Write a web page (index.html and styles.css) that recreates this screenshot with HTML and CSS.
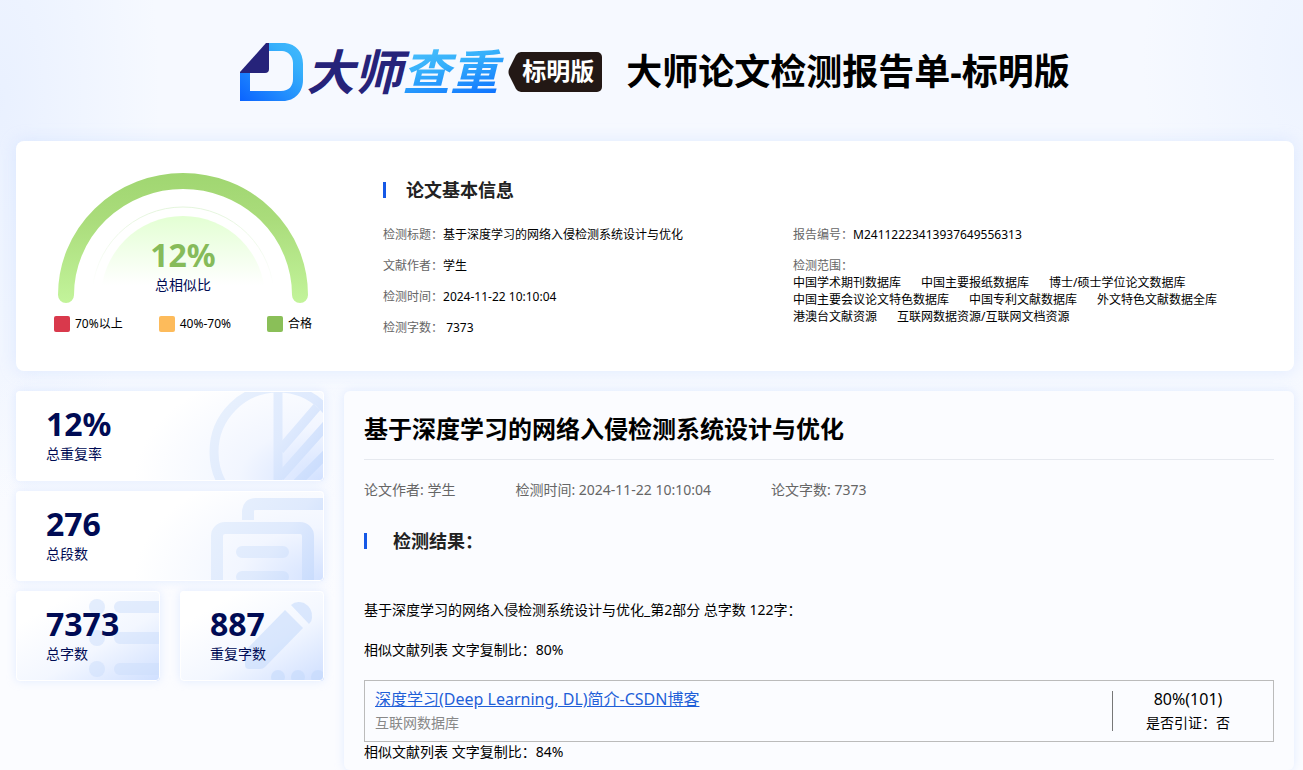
FILE: index.html
```html
<!DOCTYPE html>
<html lang="zh-CN">
<head>
<meta charset="utf-8">
<meta name="viewport" content="width=device-width, initial-scale=1">
<title>大师论文检测报告单-标明版</title>
<link rel="stylesheet" href="styles.css">
</head>
<body>
<div class="page">
  <header class="header">
    <div class="logo">
      <svg class="logo-mark" width="63" height="58" viewBox="0 0 63 58" aria-hidden="true">
        <defs>
          <linearGradient id="markBlue" x1="0" y1="1" x2="1" y2="0">
            <stop offset="0" stop-color="#0a63ff"/>
            <stop offset=".75" stop-color="#36b0fb"/>
            <stop offset="1" stop-color="#43bbfc"/>
          </linearGradient>
        </defs>
        <path fill="url(#markBlue)" d="M27 0H45C56 1 63 9 63 21V37C63 49 55 58 43 58H0V30H10V48H41C49 48 53 43 53 36V20C53 13 48 8 42 8H27Z"/>
        <path fill="#26237a" d="M26 0H29V26Q29 30 25 30H0V29Z"/>
      </svg>
      <span class="logo-name">大师<span class="logo-accent">查重</span></span>
      <span class="edition"><svg class="edition-tip" width="13" height="40" viewBox="0 0 13 40" aria-hidden="true"><path fill="#231815" d="M13 0Q10 0 8 3L1 17Q0 20 1 23L8 37Q10 40 13 40Z"/></svg><span class="edition-label">标明版</span></span>
    </div>
    <h1 class="report-title">大师论文检测报告单-标明版</h1>
  </header>

  <main>
    <section class="summary">
      <div class="overview">
        <div class="gauge">
          <svg class="gauge-art" width="250" height="131" viewBox="0 0 250 131" aria-hidden="true">
            <defs>
              <linearGradient id="arcGreen" gradientUnits="userSpaceOnUse" x1="0" y1="0" x2="0" y2="131">
                <stop offset="0" stop-color="#a0d671"/>
                <stop offset=".35" stop-color="#aadc7b"/>
                <stop offset="1" stop-color="#c3f49b"/>
              </linearGradient>
              <linearGradient id="discGreen" gradientUnits="userSpaceOnUse" x1="0" y1="43" x2="0" y2="112">
                <stop offset="0" stop-color="#e3ffd3"/>
                <stop offset="1" stop-color="#ffffff"/>
              </linearGradient>
              <linearGradient id="hairGreen" gradientUnits="userSpaceOnUse" x1="0" y1="34" x2="0" y2="112">
                <stop offset="0" stop-color="#e4f5dc"/>
                <stop offset="1" stop-color="#ffffff"/>
              </linearGradient>
            </defs>
            <path d="M8 122A117 114 0 0 1 242 122" fill="none" stroke="url(#arcGreen)" stroke-width="16" stroke-linecap="round"/>
            <path d="M34 125A91 91 0 0 1 216 125" fill="none" stroke="url(#hairGreen)"/>
            <path d="M43 125A82 82 0 0 1 207 125Z" fill="url(#discGreen)"/>
          </svg>
          <div class="gauge-text">
            <strong class="gauge-value">12%</strong>
            <span class="gauge-label">总相似比</span>
          </div>
        </div>
        <ul class="legend">
          <li class="legend-item"><span class="swatch swatch-high"></span>70%以上</li>
          <li class="legend-item"><span class="swatch swatch-mid"></span>40%-70%</li>
          <li class="legend-item"><span class="swatch swatch-ok"></span>合格</li>
        </ul>
      </div>
      <div class="basics">
        <h2 class="section-title">论文基本信息</h2>
        <div class="facts">
          <dl class="fact-list">
            <div class="fact"><dt>检测标题：</dt><dd>基于深度学习的网络入侵检测系统设计与优化</dd></div>
            <div class="fact"><dt>文献作者：</dt><dd>学生</dd></div>
            <div class="fact"><dt>检测时间：</dt><dd>2024-11-22 10:10:04</dd></div>
            <div class="fact"><dt>检测字数：</dt><dd>&nbsp;7373</dd></div>
          </dl>
          <dl class="fact-list">
            <div class="fact"><dt>报告编号：</dt><dd>M24112223413937649556313</dd></div>
            <div class="fact fact-block">
              <dt>检测范围：</dt>
              <dd class="scope">
                <span>中国学术期刊数据库</span><span>中国主要报纸数据库</span><span>博士/硕士学位论文数据库</span>
                <span>中国主要会议论文特色数据库</span><span>中国专利文献数据库</span><span>外文特色文献数据全库</span>
                <span>港澳台文献资源</span><span>互联网数据资源/互联网文档资源</span>
              </dd>
            </div>
          </dl>
        </div>
      </div>
    </section>

    <div class="columns">
      <aside class="stats">
        <div class="stat stat-wide">
          <svg class="stat-art" width="120" height="90" viewBox="0 0 120 90" aria-hidden="true">
            <defs>
              <linearGradient id="artBlue" gradientUnits="userSpaceOnUse" x1="0" y1="0" x2="120" y2="90">
                <stop offset="0" stop-color="#eaf2fd"/>
                <stop offset=".6" stop-color="#dfeafd"/>
                <stop offset="1" stop-color="#c6dafd"/>
              </linearGradient>
            </defs>
            <g fill="none" stroke="url(#artBlue)" stroke-width="9">
              <circle cx="74" cy="61" r="64"/>
              <path d="M74 0V90"/>
              <path d="M76 59L113 16M76 86L125 31M93 92L125 60"/>
            </g>
          </svg>
          <strong class="stat-value">12%</strong>
          <span class="stat-label">总重复率</span>
        </div>
        <div class="stat stat-wide">
          <svg class="stat-art" width="120" height="90" viewBox="0 0 120 90" aria-hidden="true">
            <g fill="none" stroke="url(#artBlue)" stroke-width="12">
              <path d="M44 29V21Q44 13 52 13H121"/>
              <rect x="13" y="37" width="91" height="80" rx="8"/>
              <path stroke-linecap="round" d="M38 61H79M38 86H79"/>
            </g>
          </svg>
          <strong class="stat-value">276</strong>
          <span class="stat-label">总段数</span>
        </div>
        <div class="stat stat-deep">
          <svg class="stat-art" width="144" height="90" viewBox="0 0 144 90" aria-hidden="true">
            <g fill="#ccdefc" fill-opacity=".5">
              <circle cx="81" cy="16" r="8"/><circle cx="81" cy="47" r="8"/><circle cx="81" cy="78" r="8"/>
              <path d="M104 10H144V22H104A6 6 0 0 1 104 10ZM104 41H144V53H104A6 6 0 0 1 104 41ZM104 72H144V84H104A6 6 0 0 1 104 72Z"/>
            </g>
          </svg>
          <strong class="stat-value">7373</strong>
          <span class="stat-label">总字数</span>
        </div>
        <div class="stat stat-deep">
          <svg class="stat-art" width="144" height="90" viewBox="0 0 144 90" aria-hidden="true">
            <g fill="#c3d8fb" fill-opacity=".55">
              <path d="M105 19L123 37L85 76Q83 78 80 78H69Q65 78 65 74V62Q65 60 67 58Z"/>
              <path d="M111 14Q116 9 124 12Q133 17 132 27Q132 30 129 33Z"/>
              <circle cx="98" cy="86" r="7"/><circle cx="118" cy="86" r="7"/><circle cx="138" cy="86" r="7"/>
            </g>
          </svg>
          <strong class="stat-value">887</strong>
          <span class="stat-label">重复字数</span>
        </div>
      </aside>

      <article class="report">
        <h2 class="paper-title">基于深度学习的网络入侵检测系统设计与优化</h2>
        <div class="paper-meta">
          <span>论文作者: 学生</span>
          <span>检测时间: 2024-11-22 10:10:04</span>
          <span>论文字数: 7373</span>
        </div>
        <h3 class="section-title result-title">检测结果：</h3>
        <p class="line">基于深度学习的网络入侵检测系统设计与优化_第2部分 总字数 122字：</p>
        <p class="line">相似文献列表 文字复制比：80%</p>
        <div class="source">
          <div class="source-main">
            <a class="source-link" href="#">深度学习(Deep Learning, DL)简介-CSDN博客</a>
            <span class="source-origin">互联网数据库</span>
          </div>
          <div class="source-score">
            <span class="score-rate">80%(101)</span>
            <span>是否引证：否</span>
          </div>
        </div>
        <p class="line line-tight">相似文献列表 文字复制比：84%</p>
      </article>
    </div>
  </main>
</div>
</body>
</html>
```

FILE: styles.css
```css
* {
  box-sizing: border-box;
}

body {
  margin: 0;
  overflow-x: hidden;
  color: #000;
  font-family: "Noto Sans", "Noto Sans CJK SC", sans-serif;
  font-size: 14px;
  line-height: 20px;
}

h1, h2, h3, p, dl, dd, ul {
  margin: 0;
  padding: 0;
}

.page {
  min-height: 100vh;
  padding: 0 9px 0 16px;
  background:
    radial-gradient(ellipse 160px 400px at 0 100px, rgba(225, 235, 255, .6), rgba(225, 235, 255, 0)),
    radial-gradient(ellipse 160px 300px at 100% 60px, rgba(225, 235, 255, .4), rgba(225, 235, 255, 0)),
    linear-gradient(180deg, #f6f9ff 0, #f6f9ff 370px, #fbfcff 600px);
}

.header {
  display: flex;
  align-items: center;
  justify-content: center;
  gap: 24px;
  padding: 36px 0 33px;
}

.logo {
  display: flex;
  align-items: center;
}

.logo-mark {
  margin-right: 3px;
}

.logo-name {
  color: #26237a;
  font-size: 48px;
  font-style: italic;
  font-weight: 700;
  line-height: 72px;
}

.logo-accent {
  padding-right: 10px;
  color: transparent;
  background: linear-gradient(165deg, #4cc0fc 10%, #35b0fb 40%, #0a6cff 90%);
  background-clip: text;
  -webkit-background-clip: text;
}

.edition {
  display: flex;
}

.edition-label {
  height: 40px;
  padding: 0 8px 0 1px;
  border-radius: 0 5px 5px 0;
  background: #231815;
  color: #fff;
  font-size: 24px;
  font-weight: 700;
  line-height: 38px;
}

.report-title {
  font-size: 36px;
  font-weight: 700;
  line-height: 48px;
}

.summary {
  display: flex;
  min-height: 230px;
  border-radius: 8px;
  background: #fff;
  box-shadow: 0 0 16px rgba(190, 212, 255, .4);
}

.overview {
  flex: none;
  width: 334px;
  padding-top: 32px;
}

.gauge {
  display: grid;
  justify-content: center;
}

.gauge-art,
.gauge-text {
  grid-area: 1 / 1;
}

.gauge-text {
  display: flex;
  flex-direction: column;
  align-items: center;
  padding-top: 61px;
}

.gauge-value {
  color: #86bb5a;
  font-size: 32px;
  line-height: 41px;
}

.gauge-label {
  color: #000b54;
}

.legend {
  display: flex;
  justify-content: center;
  gap: 36px;
  margin-top: 10px;
  list-style: none;
  font-size: 12px;
}

.legend-item {
  display: flex;
  align-items: center;
  gap: 5px;
}

.swatch {
  width: 16px;
  height: 16px;
  border-radius: 2px;
}

.swatch-high {
  background: #d9394c;
}

.swatch-mid {
  background: #fdbb5b;
}

.swatch-ok {
  background: #8abf58;
}

.basics {
  flex: 1;
  padding: 37px 20px 20px 33px;
}

.section-title {
  display: flex;
  align-items: center;
  gap: 20px;
  color: #222;
  font-size: 18px;
  line-height: 24px;
}

.section-title::before {
  content: "";
  width: 3px;
  height: 16px;
  background: #1558e6;
}

.facts {
  display: grid;
  grid-template-columns: 410px 1fr;
  margin-top: 24px;
  font-size: 12px;
  line-height: 17px;
}

.fact-list {
  display: flex;
  flex-direction: column;
  gap: 14px;
}

.fact {
  display: flex;
}

.fact-block {
  flex-direction: column;
}

.fact dt {
  color: #666;
}

.scope {
  display: flex;
  flex-wrap: wrap;
  column-gap: 20px;
}

.columns {
  display: grid;
  grid-template-columns: 308px 1fr;
  gap: 20px;
  margin-top: 20px;
}

.stats {
  display: grid;
  grid-template-columns: 1fr 1fr;
  grid-auto-rows: 90px;
  gap: 10px 20px;
  align-content: start;
}

.stat {
  position: relative;
  display: flex;
  flex-direction: column;
  padding: 13px 0 0 30px;
  border-radius: 4px;
  overflow: hidden;
  color: #000b54;
  box-shadow: 0 0 10px rgba(190, 212, 255, .4);
}

.stat-wide {
  grid-column: 1 / -1;
  background: radial-gradient(ellipse 190px 120px at 100% 100%, #d2e1ff, #f2f6ff 45%, #fff);
}

.stat-deep {
  background: linear-gradient(150deg, #fff 20%, #f3f7ff 60%, #cfdfff);
}

.stat::after {
  content: "";
  position: absolute;
  inset: 0;
  border: 1px solid #fff;
  border-radius: 4px;
}

.stat-art {
  position: absolute;
  top: 0;
  right: 0;
}

.stat-value,
.stat-label {
  position: relative;
}

.stat-value {
  font-size: 32px;
  line-height: 40px;
}

.stat-label {
  line-height: 20px;
}

.report {
  min-height: 379px;
  padding: 20px 20px 8px;
  border-radius: 6px;
  background: #fbfcff;
  box-shadow: 0 0 10px rgba(190, 212, 255, .4);
}

.paper-title {
  padding: 2px 0 14px;
  border-bottom: 1px solid #e6e9ef;
  font-size: 24px;
  line-height: 32px;
}

.paper-meta {
  display: flex;
  gap: 60px;
  margin-top: 20px;
  color: #666;
}

.result-title {
  gap: 26px;
  margin: 29px 0 47px;
}

.line {
  margin-bottom: 20px;
}

.line-tight {
  margin: 0;
}

.source {
  display: flex;
  align-items: center;
  padding: 6px 10px;
  border: 1px solid #bbb;
}

.source-main,
.source-score {
  display: flex;
  flex-direction: column;
}

.source-main {
  flex: 1;
  align-items: flex-start;
  line-height: 24px;
}

.source-link {
  color: #1f5fd8;
  font-size: 16px;
}

.source-origin {
  color: #888;
}

.source-score {
  align-items: center;
  justify-content: center;
  width: 151px;
  height: 40px;
  border-left: 1px solid #777;
  line-height: 24px;
}

.score-rate {
  font-size: 16px;
}
```
